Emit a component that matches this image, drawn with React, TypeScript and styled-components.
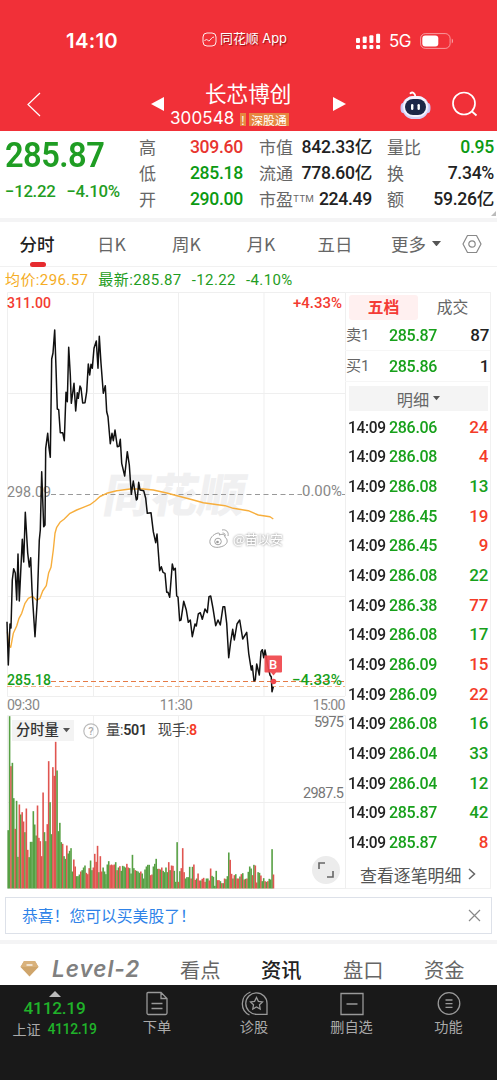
import React from "react";
import styled, { createGlobalStyle } from "styled-components";

const CJK = '"Noto Sans CJK SC", sans-serif';
const NUM = `Roboto, ${CJK}`;
const GREEN = "#1f9d23";
const RED = "#e8352f";
const GRAY = "#666666";

const Global = createGlobalStyle`
  * { box-sizing: border-box; }
  html, body { margin: 0; padding: 0; background: #fff; }
  body { font-family: ${CJK}; color: #222; }
  svg { display: block; flex: none; }
`;

const Screen = styled.div`
  width: 497px;
  height: 1080px;
  display: flex;
  flex-direction: column;
  overflow: hidden;
  background: #fff;
`;

const Header = styled.header`
  height: 131px;
  flex: none;
  background: #f13038;
  color: #fff;
`;

const StatusBar = styled.div`
  height: 80px;
  padding-top: 2px;
  display: grid;
  grid-template-columns: 66px 136px 154px 33px 31px 1fr;
  align-items: center;
`;

const Clock = styled.span`
  grid-column: 2;
  font: 600 20.3px/30px Inter, sans-serif;
  letter-spacing: 0.3px;
`;

const AppBadge = styled.span`
  display: flex;
  align-items: center;
  gap: 3px;
  margin-top: -4px;
  font: 400 12.9px/20px Inter, ${CJK};
  text-shadow: 1px 1px 1px rgba(90, 0, 0, 0.6);
`;

const Network = styled.span`
  font: 400 17px/28px Inter, sans-serif;
  letter-spacing: -0.6px;
`;

const NavBar = styled.nav`
  height: 51px;
  display: grid;
  grid-template-columns: 26px 124px 20px 162px 68px 52px 1fr;
  align-items: start;
`;

const NavIcon = styled.span<{ $top: number }>`
  padding-top: ${(p) => p.$top}px;
`;

const TitleBlock = styled.div`
  display: flex;
  flex-direction: column;
`;

const StockName = styled.div`
  font: 400 21.6px/25px ${CJK};
  padding-left: 35px;
  height: 27px;
`;

const CodeRow = styled.div`
  display: flex;
  align-items: center;
  height: 22px;
`;

const Code = styled.span`
  width: 70px;
  font: 400 17px/22px Inter, sans-serif;
  letter-spacing: 0.1px;
`;

const Tag = styled.span<{ $w: number }>`
  width: ${(p) => p.$w}px;
  height: 13px;
  margin: 3px 3px 0 0;
  background: #e6873f;
  display: flex;
  justify-content: center;
  align-items: center;
  white-space: nowrap;
  font: 400 11.8px/18px ${CJK};
`;

const Quote = styled.section`
  height: 87px;
  flex: none;
  padding: 3px 3px 0 5px;
  display: grid;
  grid-template-columns: 134px 104px 16px 113px 15px 107px;
`;

const PriceBlock = styled.div`
  color: ${GREEN};
  font-family: ${NUM};
`;

/* Narrows digits horizontally so they keep their full height. */
const Narrow = styled.span<{ $x: number }>`
  display: inline-block;
  transform: scaleX(${(p) => p.$x});
  transform-origin: left center;
`;

const LastPrice = styled.div`
  font-size: 35.5px;
  line-height: 42px;
  font-weight: 600;
  letter-spacing: -0.6px;
`;

const Changes = styled.div`
  display: flex;
  gap: 11px;
  margin-top: 4px;
  font-size: 16.8px;
  line-height: 22px;
  letter-spacing: -0.3px;
  font-weight: 500;
`;

const StatColumn = styled.div<{ $col: number }>`
  grid-column: ${(p) => p.$col};
  display: flex;
  flex-direction: column;
`;

const Stat = styled.div`
  height: 26px;
  display: flex;
  justify-content: space-between;
  align-items: center;
  white-space: nowrap;
`;

const StatLabel = styled.span`
  font-size: 17px;
  line-height: 26px;
  color: ${GRAY};
`;

const Sup = styled.span`
  font: 400 9.5px/10px Inter, sans-serif;
  vertical-align: 4px;
`;

const StatValue = styled.span<{ $color?: string }>`
  font: 500 17.6px/26px ${NUM};
  letter-spacing: -0.3px;
  color: ${(p) => p.$color || "#222"};
`;

const ResizeMark = styled.div`
  width: 0;
  height: 0;
  margin: -1px -2px 0 auto;
  border-left: 5px solid transparent;
  border-bottom: 5px solid #bbb;
`;

const Band = styled.div<{ $h: number }>`
  height: ${(p) => p.$h}px;
  flex: none;
  background: #f4f4f5;
`;

const ChartTabs = styled.div`
  height: 45px;
  flex: none;
  display: grid;
  grid-template-columns: 74px 75px 75px 74px 74px 88px 24px;
  border-bottom: 1px solid #f1f1f1;
`;

const ChartTab = styled.div<{ $active?: boolean }>`
  display: flex;
  align-items: center;
  justify-content: center;
  gap: 6px;
  position: relative;
  padding-bottom: 1px;
  font-size: 17.5px;
  line-height: 26px;
  color: ${(p) => (p.$active ? "#222" : GRAY)};
  font-weight: ${(p) => (p.$active ? 500 : 400)};
  &::after {
    content: "";
    display: ${(p) => (p.$active ? "block" : "none")};
    position: absolute;
    left: 30px;
    bottom: -1px;
    width: 16px;
    height: 5px;
    border-radius: 2.5px;
    background: #e62b2f;
  }
`;

const Summary = styled.div`
  height: 25px;
  flex: none;
  display: flex;
  padding: 1px 0 0 5px;
  gap: 10px;
  font: 400 15px/24px ${NUM};
  letter-spacing: 0.4px;
  color: ${GREEN};
`;

const Avg = styled.span`
  color: #f5ad25;
`;

const Main = styled.main`
  height: 597px;
  flex: none;
  display: flex;
  padding-left: 7px;
`;

const Charts = styled.div`
  width: 338px;
  flex: none;
`;

const ChartText = styled.text`
  font-family: ${NUM};
`;

const Watermark = styled.text`
  font-family: ${CJK};
  font-weight: 900;
  fill: #f0f0f1;
`;

const Signature = styled.text`
  font-family: ${CJK};
  font-size: 13px;
  fill: #fff;
  filter: drop-shadow(0 0 1px rgba(90, 90, 90, 0.85));
`;

const TimeAxis = styled.div`
  height: 19px;
  display: flex;
  justify-content: space-between;
  font: 400 14.2px/19px ${NUM};
  letter-spacing: -0.6px;
  color: #888;
`;

const VolumeArea = styled.div`
  position: relative;
  height: 174px;
`;

const VolumeLegend = styled.div`
  position: absolute;
  left: 5px;
  top: 5px;
  display: flex;
  align-items: center;
  height: 21px;
  color: #444;
  font: 500 14.3px/21px ${NUM};
  white-space: nowrap;
`;

const VolumeSelect = styled.div`
  width: 62px;
  height: 21px;
  padding-left: 4px;
  margin-right: 9px;
  display: flex;
  align-items: center;
  gap: 4px;
  background: rgba(243, 243, 243, 0.96);
  color: #333;
  font-weight: 500;
`;

const LegendItem = styled.span<{ $gap: number }>`
  margin-left: ${(p) => p.$gap}px;
  letter-spacing: -0.3px;
  font-weight: 400;
  b { font-weight: 600; color: #333; }
  b.up { color: #f43b28; }
`;

const Expand = styled.div`
  position: absolute;
  right: 5px;
  bottom: 5px;
  width: 28px;
  height: 28px;
  border-radius: 50%;
  background: #ececec;
  display: flex;
  align-items: center;
  justify-content: center;
`;

const Book = styled.aside`
  width: 146px;
  display: flex;
  flex-direction: column;
  border: 1px solid #f1f1f1;
  border-width: 1px 1px 1px 0;
`;

const BookTabs = styled.div`
  display: flex;
  padding: 2px 0 0 4px;
  height: 27px;
`;

const BookTab = styled.div<{ $active?: boolean }>`
  width: 69px;
  height: 25px;
  border-radius: 3px;
  text-align: center;
  font-size: 15.8px;
  line-height: 24px;
  font-weight: ${(p) => (p.$active ? 700 : 400)};
  color: ${(p) => (p.$active ? "#f43b35" : GRAY)};
  background: ${(p) => (p.$active ? "#fff0f0" : "transparent")};
`;

const Level = styled.div`
  height: 31px;
  display: grid;
  grid-template-columns: 43px 1fr auto;
  padding: 0 1px 0 1px;
  align-items: center;
  font: 500 17px/31px ${NUM};
  letter-spacing: -0.3px;
  border-bottom: 1px solid #f6f6f6;
`;

const LevelName = styled.span`
  font-size: 15.2px;
  font-weight: 400;
  color: ${GRAY};
`;

const Green = styled(Narrow)`
  color: #17a01b;
`;

const DetailBar = styled.div`
  height: 25px;
  margin: 4px 2px 0 4px;
  display: flex;
  align-items: center;
  justify-content: center;
  gap: 4px;
  background: #f4f4f4;
  color: ${GRAY};
  font-size: 16.2px;
`;

const Trades = styled.div`
  padding-top: 0.5px;
`;

const Trade = styled.div`
  height: 29.68px;
  display: grid;
  grid-template-columns: 41px 1fr auto;
  padding: 0 2px 0 3px;
  font: 500 17px/30px ${NUM};
  letter-spacing: -0.3px;
  color: #222;
`;

const Amount = styled.span<{ $up: boolean }>`
  color: ${(p) => (p.$up ? "#f43b28" : "#17a01b")};
`;

const MoreLink = styled.div`
  flex: 1;
  display: flex;
  align-items: center;
  gap: 7px;
  padding: 4px 0 0 15px;
  font-size: 16.9px;
  white-space: nowrap;
  color: #555;
`;

const Notice = styled.div`
  height: 37px;
  flex: none;
  margin: 8px 5px 6px;
  padding: 0 10px 0 16px;
  display: flex;
  align-items: center;
  justify-content: space-between;
  border: 1px solid #dde1e9;
  color: #2f83e8;
  font-size: 15.8px;
`;

const InfoTabs = styled.div`
  height: 41px;
  flex: none;
  display: grid;
  grid-template-columns: 20px 32px 128px 81px 82px 81px 1fr;
  align-items: center;
  padding-top: 8px;
`;

const LevelTwo = styled.span`
  font: italic 600 22.5px/28px Inter, sans-serif;
  color: #808080;
  letter-spacing: 1px;
`;

const InfoTab = styled.span<{ $active?: boolean }>`
  font-size: 20.3px;
  line-height: 30px;
  color: ${(p) => (p.$active ? "#222" : GRAY)};
  font-weight: ${(p) => (p.$active ? 500 : 400)};
`;

const Footer = styled.footer`
  height: 95px;
  flex: none;
  background: #191919;
  color: #aaa;
  display: grid;
  grid-template-columns: 109px 96px 98px 97px 97px;
`;

const IndexCell = styled.div`
  padding-top: 6px;
  display: flex;
  flex-direction: column;
  align-items: center;
`;

const IndexMain = styled.div`
  padding-top: 1px;
  font: 500 17.2px/21px ${NUM};
  letter-spacing: -0.2px;
  color: #20b32a;
`;

const IndexSub = styled.div`
  display: flex;
  gap: 7px;
  font-size: 14px;
  line-height: 20px;
  span { font-family: ${NUM}; font-weight: 500; color: #20b32a; letter-spacing: -0.35px; }
`;

const Action = styled.div`
  padding-top: 6px;
  display: flex;
  flex-direction: column;
  align-items: center;
  font-size: 14.2px;
  line-height: 20px;
`;

const PRICE: [number, number][] = [
  [7, 621.7], [8.3, 665], [10, 624], [11, 628], [12.3, 580], [13.7, 568.7], [15.3, 573], [16.7, 600],
  [18, 554], [19.3, 601], [22.3, 539.3], [23.7, 562], [25.3, 512.3], [27.7, 553], [29.3, 567], [30.7, 557.7],
  [32, 590], [35, 636.7], [37.3, 600], [39.3, 540], [40.3, 530], [41.7, 471.7], [43.7, 526.7], [45, 525],
  [45.7, 448.3], [47.7, 433.3], [49, 448], [50.3, 457.3], [51.7, 359], [53, 353], [54.7, 330], [56, 368],
  [57.3, 409], [58.7, 409.7], [60.3, 432.7], [62.7, 432.7], [64.3, 440.7], [66, 392.3], [67.3, 401.7],
  [68.7, 347.3], [70.3, 375], [71.3, 403.3], [74, 383.3], [75.7, 411], [77.3, 392.7], [78.3, 398.3],
  [80, 386], [81, 388], [82.7, 403], [85, 402.7], [86.7, 391.7], [88.3, 364], [89.7, 375], [91, 364.3],
  [92.3, 368.3], [94, 348.3], [96.3, 341], [98, 368.3], [99.3, 336.3], [101, 363.3], [103.3, 393.3],
  [105.3, 385.7], [106.7, 411.7], [108, 416.7], [110.3, 443.7], [112, 433.3], [113.3, 440.7], [115, 430],
  [117.3, 446.7], [119, 446.3], [120.3, 439.3], [121.7, 463.3], [124.7, 476], [127.3, 451.7], [129.3, 465],
  [131.3, 494.3], [133.3, 481], [136.3, 500], [137.3, 499], [138.7, 482.3], [140, 490], [143.7, 490.7],
  [145.7, 498.3], [147.3, 513.3], [151, 512.7], [153.3, 531.7], [155.7, 542.7], [157, 534], [159.7, 570.7],
  [161.3, 566.7], [163, 572.3], [165, 573.3], [166.7, 592.3], [168, 592.3], [169.7, 597.3], [172.3, 564],
  [173.7, 570], [175.3, 568.3], [176.7, 596], [178, 597], [179.7, 620.7], [181, 620], [183.7, 601.3],
  [186.3, 610], [188.3, 622.3], [190.3, 620], [192.3, 636.7], [195, 624], [196.3, 626], [198.3, 614],
  [200.3, 612.7], [202.3, 619.3], [205, 609], [207.3, 612.7], [209, 596.7], [210.7, 596], [213, 608.3],
  [215.7, 625.7], [218, 620], [220.3, 625], [223, 606.7], [224.7, 606.7], [226.7, 623.3], [228.7, 657.7],
  [230.7, 641.7], [232.7, 629.3], [234.3, 640], [237, 624], [239.7, 620], [242.7, 639], [246.7, 632.3],
  [248.7, 653.3], [251.3, 670], [252.3, 665.7], [254, 681], [255.3, 680], [256.7, 664], [259.3, 675],
  [261, 651.7], [262.3, 649.7], [263.7, 657.7], [265, 650], [267.3, 663], [270, 675], [271.3, 677],
  [272, 691.7], [273.3, 686.7],
];

const AVERAGE: [number, number][] = [
  [7.3, 631.7], [9, 645], [10.7, 647.3], [13.3, 633.3], [16.7, 626], [19, 618.3], [21.7, 613.3], [25, 603.3],
  [28.3, 598.3], [32.3, 596.3], [36.7, 600.3], [40, 598.3], [42.7, 591], [46.3, 585.7], [48.7, 572.7],
  [51, 567.3], [53.3, 550], [55, 533.3], [56.7, 527.3], [60, 522.3], [64, 519.3], [70, 513.3], [76.7, 510],
  [83.3, 507.3], [90, 504.7], [95, 501], [100, 496.5], [106.7, 493.3], [116.7, 490.7], [130, 489],
  [143.3, 489], [153.3, 490], [166.7, 493], [180, 496.5], [193.3, 500], [203.3, 502.7], [225, 505.7],
  [233.3, 508.3], [248.3, 510.7], [258.3, 515], [270, 516.7], [273.3, 519],
];

// One entry per minute: bar top on a 0..550 scale, then g (down) or r (up).
const VOLUME = (
  "375g 33g 183r 173g 279g 371r 287g 455g 298r 328g 321r 349r 381g 310r 434r 456g 410g 410g 318g 358g 391g 301r " +
  "398r 408r 453r 262r 381g 408g 357r 168r 291g 387g 186r 212r 110r 196g 378g 353g 411g 416r 453g 461g 421r 445g " +
  "437g 429g 499g 463r 484r 513g 513g 508g 499r 495g 487g 481g 503r 507r 489r 466g 495g 487r 446r 470r 422r 501g " +
  "453r 499r 487g 499g 507g 478g 468g 480r 478r 480r 478r 471g 495r 487g 483r 497g 482g 484g 487g 476r 487r 489g " +
  "505g 449g 489g 495r 497g 499g 503g 499r 505g 520g 493g 484g 479g 479g 510r 508r 484g 476g 461g 491g 491r 493g " +
  "487r 497g 501g 487g 501g 471r 495g 481r 482r 497g 530g 411g 530r 498g 489r 429r 501r 520g 516g 516g 485g 520r " +
  "485g 478r 524r 520g 505r 526r 526g 521r 518r 530r 520g 520g 526r 490r 512g 515g 542g 497g 525r 525r 528g 534r " +
  "534g 520r 522g 513g 442g 464r 506r 520g 510r 507g 520r 520r 514g 507r 504g 523r 521g 520r 500g 484g 490g 510r " +
  "479g 481r 532r 501g 503g 511r 528g 519g 528r 530g 528r 521g 523g 432g 508r"
).split(" ");

const toPoints = (list: [number, number][]) => list.map(([x, y]) => `${x - 7},${y - 292}`).join(" ");

const TRADES: [string, number, boolean][] = [
  ["286.06", 24, true], ["286.08", 4, true], ["286.08", 13, false], ["286.45", 19, true], ["286.45", 9, true],
  ["286.08", 22, false], ["286.38", 77, true], ["286.08", 17, false], ["286.09", 15, true], ["286.09", 22, true],
  ["286.08", 16, false], ["286.04", 33, false], ["286.04", 12, false], ["285.87", 42, false], ["285.87", 8, true],
];

const Caret = ({ size = 8, color = "#555" }: { size?: number; color?: string }) => (
  <svg width={size} height={size * 0.6} viewBox="0 0 10 6">
    <path d="M0 0H10L5 6Z" fill={color} />
  </svg>
);

const PriceChart = () => (
  <svg width="338" height="404" viewBox="0 0 338 404" overflow="visible">
    <g stroke="#efefef" fill="none">
      <path d="M0.5 0.5H338.5V404M0.5 0.5V404.5H338M0 101.5H338M0 304.5H338M86.5 0V404M171.5 0V404M257 0V404" />
    </g>
    <Watermark x="95" y="220" fontSize="46" textLength="142" lengthAdjust="spacingAndGlyphs" transform="translate(38 0) skewX(-10)">同花顺</Watermark>
    <ChartText x="0" y="205" fontSize="15.5" fill="#888" textLength="44" lengthAdjust="spacingAndGlyphs">298.09</ChartText>
    <ChartText x="295" y="204" fontSize="15.5" fill="#888" textLength="40" lengthAdjust="spacingAndGlyphs">0.00%</ChartText>
    <path d="M44 202.5H295M335 202.5H338" stroke="#999" strokeDasharray="5 3.5" />
    <path d="M44 389.5H338" stroke="#e67a45" strokeDasharray="5 3" />
    <path d="M0 394.5H338" stroke="#f0b48a" strokeDasharray="5 3" />
    <polyline points={toPoints(AVERAGE)} fill="none" stroke="#f7ae3c" strokeWidth="1.4" strokeLinejoin="round" />
    <polyline points={toPoints(PRICE)} fill="none" stroke="#111" strokeWidth="1.5" strokeLinejoin="round" />
    <ChartText x="0" y="15.5" fontSize="15.3" fontWeight="500" fill="#f33b30" textLength="44" lengthAdjust="spacingAndGlyphs">311.00</ChartText>
    <ChartText x="286" y="15.5" fontSize="15.3" fontWeight="500" fill="#f33b30" textLength="49" lengthAdjust="spacingAndGlyphs">+4.33%</ChartText>
    <ChartText x="0" y="393" fontSize="15.3" fontWeight="500" fill="#17a01b" textLength="44" lengthAdjust="spacingAndGlyphs">285.18</ChartText>
    <ChartText x="285" y="393" fontSize="15.3" fontWeight="500" fill="#17a01b" textLength="50" lengthAdjust="spacingAndGlyphs">−4.33%</ChartText>
    <path d="M258.5 363.5h15.5a1 1 0 0 1 1 1v15a1 1 0 0 1-1 1h-5l-2.5 3-2.5-3h-5.5a1 1 0 0 1-1-1v-15a1 1 0 0 1 1-1z" fill="#f0474c" opacity="0.93" />
    <circle cx="266.5" cy="389.5" r="2.8" fill="#f0474c" />
    <ChartText x="266" y="377" fontSize="13" fontWeight="500" fill="#fff" textAnchor="middle">B</ChartText>
    <g fill="#fff" stroke="#9a9a9a" strokeWidth="0.9">
      <path d="M211 241c-5 1-9 6-8 10 1 4 6 5 10 4 5-1 8-4 7-7 0-2-2-2-2-3 0-3-3-3-6-2 1-1 1-2-1-2z" />
      <circle cx="211" cy="249.5" r="3.3" />
      <path d="M215 238c4-1 7 2 6 6M215.5 241c2 0 3 1 2.5 3" fill="none" />
    </g>
    <circle cx="210.5" cy="250" r="1.3" fill="#999" />
    <Signature x="226" y="252" textLength="50">@苗以安</Signature>
  </svg>
);

const VolumeChart = () => {
  const pitch = 800 / 3 / VOLUME.length;
  return (
    <svg width="338" height="174" viewBox="0 0 338 174" overflow="visible">
      <path d="M0.5 0.5H338.5V173.5H0.5ZM0 87.5H338M86.5 0V174M171.5 0V174M257 0V174" fill="none" stroke="#efefef" />
      {VOLUME.map((v, i) => {
        const h = (550 - parseInt(v, 10)) / 3;
        return (
          <rect key={i} x={0.4 + i * pitch} y={173.5 - h} width={pitch + 0.2} height={h} fill={v.endsWith("g") ? "#57a044" : "#e05550"} />
        );
      })}
      <ChartText x="307" y="12" fontSize="14.5" fill="#777" textLength="30">5975</ChartText>
      <ChartText x="296" y="83" fontSize="14.5" fill="#777" textLength="41">2987.5</ChartText>
    </svg>
  );
};

const SignalIcon = () => (
  <svg width="25" height="18" viewBox="0 0 25 18" fill="#fff">
    {[0, 1, 2, 3].map((i) => (
      <g key={i}>
        <rect x={i * 6.7} y={6 - i * 1.4} width="4" height={5 + i * 1.4} rx="1" />
        <rect x={i * 6.7} y="13" width="4" height="4" rx="1" />
      </g>
    ))}
  </svg>
);

const BatteryIcon = () => (
  <svg width="34" height="16" viewBox="0 0 34 16">
    <rect x="0.6" y="0.6" width="29.5" height="14.8" rx="4.8" fill="none" stroke="#fff" strokeOpacity="0.5" />
    <path d="M31.8 5.5c1.5 1 1.5 4 0 5z" fill="#fff" opacity="0.6" />
    <rect x="2.3" y="2.5" width="16" height="11" rx="3" fill="#fff" />
  </svg>
);

const RobotIcon = () => (
  <svg width="31" height="29" viewBox="0 0 31 29">
    <path d="M10.5 2.2c2-1.5 4.5-.5 5 4" fill="none" stroke="#fff" strokeWidth="1.8" strokeLinecap="round" />
    <ellipse cx="3" cy="17" rx="2.5" ry="5" fill="#c9c3f4" />
    <ellipse cx="28" cy="17" rx="2.5" ry="5" fill="#c9c3f4" />
    <rect x="2" y="5" width="27" height="23" rx="11.5" fill="#d5d3fa" />
    <rect x="3" y="5" width="25" height="21" rx="10.5" fill="#f5f4ff" />
    <rect x="5" y="8" width="21" height="16" rx="8" fill="#1c2748" />
    <rect x="11" y="13" width="2.4" height="6" rx="1.2" fill="#fff" />
    <rect x="17.5" y="13" width="2.4" height="6" rx="1.2" fill="#fff" />
  </svg>
);

const STATS = [
  { col: 2, rows: [["高", "309.60", RED], ["低", "285.18", "#0b9a12"], ["开", "290.00", "#0b9a12"]] },
  { col: 4, rows: [["市值", "842.33亿"], ["流通", "778.60亿"], ["市盈", "224.49"]] },
  { col: 6, rows: [["量比", "0.95", "#0b9a12"], ["换", "7.34%"], ["额", "59.26亿"]] },
];

export default function App() {
  return (
    <Screen>
      <Global />
      <Header>
        <StatusBar>
          <Clock>14:10</Clock>
          <AppBadge>
            <svg width="15" height="15" viewBox="0 0 15 15" fill="none" stroke="#fff" strokeWidth="0.9">
              <rect x="1" y="1" width="13" height="13" rx="4" />
              <path d="M2.5 9c2-3 3-.5 4.5 0 1.5-.5 2.5-4 5-4" />
            </svg>
            同花顺 App
          </AppBadge>
          <SignalIcon />
          <Network>5G</Network>
          <BatteryIcon />
        </StatusBar>
        <NavBar>
          <span />
          <NavIcon $top={12}>
            <svg width="16" height="25" viewBox="0 0 16 25" fill="none" stroke="#fff" strokeWidth="1.2">
              <path d="M14 1L2 12.5L14 24" />
            </svg>
          </NavIcon>
          <NavIcon $top={16}>
            <svg width="15" height="16" viewBox="0 0 15 16"><path d="M14 1V15L1 8Z" fill="#fff" /></svg>
          </NavIcon>
          <TitleBlock>
            <StockName>长芯博创</StockName>
            <CodeRow>
              <Code>300548</Code>
              <Tag $w={6}>!</Tag>
              <Tag $w={40}>深股通</Tag>
            </CodeRow>
          </TitleBlock>
          <NavIcon $top={16}>
            <svg width="15" height="16" viewBox="0 0 15 16"><path d="M1 1V15L14 8Z" fill="#fff" /></svg>
          </NavIcon>
          <NavIcon $top={11}><RobotIcon /></NavIcon>
          <NavIcon $top={11}>
            <svg width="26" height="26" viewBox="0 0 26 26" fill="none" stroke="#fff" strokeWidth="1.7">
              <circle cx="12" cy="12.5" r="11" />
              <path d="M20 20.5L24.5 24.5" />
            </svg>
          </NavIcon>
        </NavBar>
      </Header>

      <Quote>
        <PriceBlock>
          <LastPrice><Narrow $x={0.92}>285.87</Narrow></LastPrice>
          <Changes><span>−12.22</span><span>−4.10%</span></Changes>
        </PriceBlock>
        {STATS.map((group) => (
          <StatColumn key={group.col} $col={group.col}>
            {group.rows.map(([label, value, color]) => (
              <Stat key={label}>
                <StatLabel>{label}{label === "市盈" && <Sup>TTM</Sup>}</StatLabel>
                <StatValue $color={color}>{value}</StatValue>
              </Stat>
            ))}
            {group.col === 6 && <ResizeMark />}
          </StatColumn>
        ))}
      </Quote>
      <Band $h={4} />

      <ChartTabs>
        <ChartTab $active>分时</ChartTab>
        <ChartTab>日K</ChartTab>
        <ChartTab>周K</ChartTab>
        <ChartTab>月K</ChartTab>
        <ChartTab>五日</ChartTab>
        <ChartTab>更多<Caret size={9} /></ChartTab>
        <ChartTab>
          <svg width="20" height="20" viewBox="0 0 20 20" fill="none" stroke="#888" strokeWidth="1.2">
            <path d="M5.5 1.5H14.5L19 10L14.5 18.5H5.5L1 10Z" strokeLinejoin="round" />
            <circle cx="10" cy="10" r="3.2" />
          </svg>
        </ChartTab>
      </ChartTabs>

      <Summary>
        <Avg>均价:296.57</Avg>
        <span>最新:285.87</span>
        <span>-12.22</span>
        <span>-4.10%</span>
      </Summary>

      <Main>
        <Charts>
          <PriceChart />
          <TimeAxis><span>09:30</span><span>11:30</span><span>15:00</span></TimeAxis>
          <VolumeArea>
            <VolumeChart />
            <VolumeLegend>
              <VolumeSelect>分时量<Caret size={7} /></VolumeSelect>
              <svg width="16" height="16" viewBox="0 0 16 16">
                <circle cx="8" cy="8" r="7.2" fill="none" stroke="#bbb" strokeWidth="1.2" />
                <ChartText x="8" y="12" fontSize="11" fill="#aaa" textAnchor="middle">?</ChartText>
              </svg>
              <LegendItem $gap={7}>量:<b>501</b></LegendItem>
              <LegendItem $gap={11}>现手:<b className="up">8</b></LegendItem>
            </VolumeLegend>
            <Expand>
              <svg width="16" height="16" viewBox="0 0 16 16" fill="none" stroke="#666" strokeWidth="1.6">
                <path d="M1 7V1H7M15 9V15H9" />
              </svg>
            </Expand>
          </VolumeArea>
        </Charts>

        <Book>
          <BookTabs>
            <BookTab $active>五档</BookTab>
            <BookTab>成交</BookTab>
          </BookTabs>
          <Level><LevelName>卖1</LevelName><Green $x={0.94}>285.87</Green><span>87</span></Level>
          <Level><LevelName>买1</LevelName><Green $x={0.94}>285.86</Green><span>1</span></Level>
          <DetailBar>明细<Caret size={7} /></DetailBar>
          <Trades>
            {TRADES.map(([price, amount, up], i) => (
              <Trade key={i}>
                <Narrow $x={0.91}>14:09</Narrow>
                <Green $x={0.94}>{price}</Green>
                <Amount $up={up}>{amount}</Amount>
              </Trade>
            ))}
          </Trades>
          <MoreLink>
            查看逐笔明细
            <svg width="8" height="12" viewBox="0 0 8 12" fill="none" stroke="#666" strokeWidth="1.5"><path d="M1 1L6.5 6L1 11" /></svg>
          </MoreLink>
        </Book>
      </Main>

      <Notice>
        恭喜！您可以买美股了！
        <svg width="13" height="13" viewBox="0 0 13 13" stroke="#888" strokeWidth="1.2"><path d="M1 1L12 12M12 1L1 12" /></svg>
      </Notice>
      <Band $h={4} />

      <InfoTabs>
        <span />
        <svg width="19" height="17" viewBox="0 0 19 17">
          <path d="M4 1H15L18.5 7L9.5 16.5L0.5 7Z" fill="#cfa56b" />
          <path d="M4 1H15L18.5 7H0.5Z" fill="#d9b27c" />
          <path d="M6.5 5H12.5" stroke="#fff" strokeWidth="1.3" />
        </svg>
        <LevelTwo>Level-2</LevelTwo>
        <InfoTab>看点</InfoTab>
        <InfoTab $active>资讯</InfoTab>
        <InfoTab>盘口</InfoTab>
        <InfoTab>资金</InfoTab>
      </InfoTabs>

      <Footer>
        <IndexCell>
          <svg width="12" height="6" viewBox="0 0 12 6"><path d="M0 6L6 0L12 6Z" fill="#bbb" /></svg>
          <IndexMain>4112.19</IndexMain>
          <IndexSub>上证<span>4112.19</span></IndexSub>
        </IndexCell>
        <Action>
          <svg width="24" height="25" viewBox="0 0 24 25" fill="none" stroke="#999" strokeWidth="1.3">
            <path d="M3 1.5H16L22 7.5V22a1.5 1.5 0 0 1-1.5 1.5H3.5A1.5 1.5 0 0 1 2 22V2.5a1 1 0 0 1 1-1zM16 1.5V7.5H22M6.5 12.5H17.5M6.5 17.5H17.5" />
          </svg>
          下单
        </Action>
        <Action>
          <svg width="27" height="25" viewBox="0 0 27 25" fill="none" stroke="#999" strokeWidth="1.3">
            <path d="M15.5 1.8a10.7 10.7 0 1 0 0 21.5H26V12.5A10.5 10.5 0 0 0 15.5 1.8zM9.5 1A12.5 12.5 0 0 0 8.5 24" />
            <path d="M15.5 6.5l1.9 3.8 4.1.6-3 2.9.7 4.2-3.7-2-3.7 2 .7-4.2-3-2.9 4.1-.6z" />
          </svg>
          诊股
        </Action>
        <Action>
          <svg width="24" height="25" viewBox="0 0 24 25" fill="none" stroke="#999" strokeWidth="1.3">
            <path d="M1 2.5H23V23.5H1ZM6.5 13H17.5" />
          </svg>
          删自选
        </Action>
        <Action>
          <svg width="24" height="25" viewBox="0 0 24 25" fill="none" stroke="#999" strokeWidth="1.3">
            <circle cx="12" cy="12.5" r="10.8" />
            <path d="M8.5 9H15.5M8.5 12.7H15.5M8.5 16.4H15.5" />
          </svg>
          功能
        </Action>
      </Footer>
    </Screen>
  );
}
